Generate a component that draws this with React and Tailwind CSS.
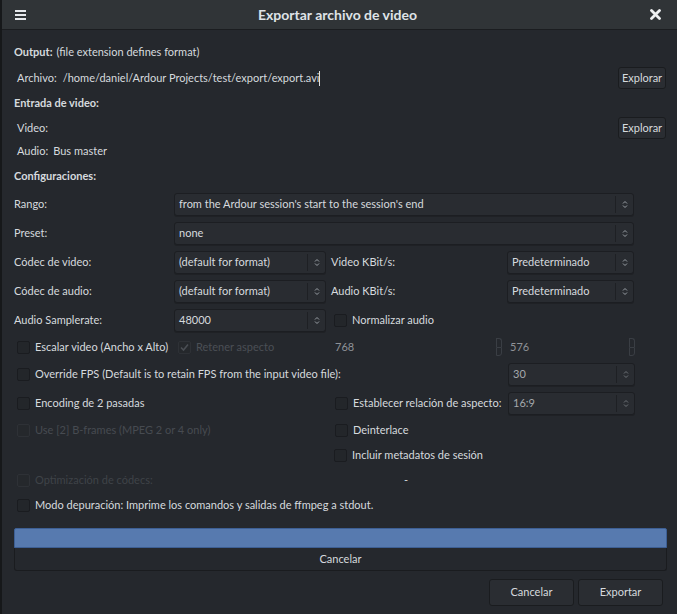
import React from "react";

const F = { fontFamily: 'Lato, "Noto Sans", "DejaVu Sans", sans-serif' };

function Check({ checked, disabled }) {
  return (
    <div
      className={`w-[13px] h-[13px] rounded-[2px] border flex items-center justify-center shrink-0 ${
        disabled ? "border-[#2e3136] bg-[#25282c]" : "border-[#1a1c20] bg-[#23262a]"
      }`}
    >
      {checked && (
        <svg width="11" height="11" viewBox="0 0 11 11">
          <path d="M2 5.5 L4.5 8 L9 2.5" fill="none" stroke={disabled ? "#4a4e54" : "#d3d7db"} strokeWidth="1.6" />
        </svg>
      )}
    </div>
  );
}

function Arrows({ dim }) {
  return (
    <svg width="6" height="9" viewBox="0 0 6 9">
      <path d="M1 3.5 L3 1.5 L5 3.5 M1 5.5 L3 7.5 L5 5.5" fill="none" stroke={dim ? "#6e7378" : "#9aa0a6"} strokeWidth="1" />
    </svg>
  );
}

function Combo({ text, w, dim }) {
  return (
    <div
      className={`h-[23px] rounded-[3px] border border-[#1c1e22] bg-[#292c31] flex items-center shrink-0 shadow-[0_1px_0_#1f2125] ${w}`}
    >
      <div className={`flex-1 pl-[4px] truncate ${dim ? "text-[#a4a8ac]" : "text-[#d6dade]"}`}>{text}</div>
      <div className="w-px h-[17px] bg-[#1e2024]" />
      <div className="w-[17px] flex items-center justify-center">
        <Arrows dim={dim} />
      </div>
    </div>
  );
}

function Btn({ children, cls }) {
  return (
    <div
      className={`rounded-[3px] border border-[#1a1c1f] bg-[#2a2d32] flex items-center justify-center text-[#d6dade] ${cls}`}
    >
      {children}
    </div>
  );
}

function Spin() {
  return (
    <div className="flex flex-col w-[6px] h-[18px]">
      <div className="h-[9px] border border-[#3a3e44] border-b-0 rounded-tr-[3px]" />
      <div className="h-[9px] border border-[#3a3e44] rounded-br-[3px]" />
    </div>
  );
}

export default function App() {
  return (
    <div style={F} className="w-[677px] h-[614px] bg-[#25282d] text-[11px] text-[#d6dade] flex flex-col overflow-hidden border-l-[2px] border-[#16181a] whitespace-nowrap">
      {/* Title bar */}
      <div className="h-[30px] bg-[#303437] border-b border-[#1b1d20] flex items-center px-[12px] shrink-0">
        <svg width="12" height="10" viewBox="0 0 12 10" className="ml-[1px]">
          <rect x="0" y="0" width="11" height="2" fill="#e6e9ec" />
          <rect x="0" y="4" width="11" height="2" fill="#e6e9ec" />
          <rect x="0" y="8" width="11" height="2" fill="#e6e9ec" />
        </svg>
        <div className="flex-1 text-center font-bold text-[14px] text-[#dfe3e7] -ml-[2px]">Exportar archivo de video</div>
        <svg width="11" height="11" viewBox="0 0 11 11" className="mr-[4px]">
          <path d="M1.5 1.5 L9.5 9.5 M9.5 1.5 L1.5 9.5" stroke="#eef0f2" strokeWidth="2.8" strokeLinecap="round" />
        </svg>
      </div>

      <div className="flex flex-col pl-[12px] pr-[11px]">
        <div className="h-[22px] mt-[11px] flex items-center">
          <span className="font-bold">Output:</span>
          <span className="ml-[4px]">(file extension defines format)</span>
        </div>
        <div className="h-[22px] mt-[4px] flex items-center">
          <span className="ml-[3px]">Archivo:</span>
          <span className="ml-[6px]">/home/daniel/Ardour Projects/test/export/export.avi</span>
          <span className="w-px h-[15px] bg-[#e0e0e0]" />
          <div className="flex-1" />
          <Btn cls="w-[48px] h-[22px]">Explorar</Btn>
        </div>
        <div className="h-[22px] mt-[3px] flex items-center font-bold">Entrada de video:</div>
        <div className="h-[22px] mt-[3px] flex items-center">
          <span className="ml-[3px]">Video:</span>
          <div className="flex-1" />
          <Btn cls="w-[48px] h-[22px]">Explorar</Btn>
        </div>
        <div className="h-[22px] mt-[1px] flex items-center">
          <span className="ml-[3px]">Audio:</span>
          <span className="ml-[5px]">Bus master</span>
        </div>
        <div className="h-[22px] mt-[3px] flex items-center font-bold">Configuraciones:</div>

        {/* Rango */}
        <div className="h-[23px] mt-[6px] flex items-center">
          <div className="w-[160px]">Rango:</div>
          <Combo w="w-[460px]" text="from the Ardour session's start to the session's end" />
        </div>
        <div className="h-[23px] mt-[6px] flex items-center">
          <div className="w-[160px]">Preset:</div>
          <Combo w="w-[460px]" text="none" />
        </div>
        <div className="h-[23px] mt-[6px] flex items-center">
          <div className="w-[160px]">Códec de video:</div>
          <Combo w="w-[152px]" text="(default for format)" />
          <div className="w-[181px] pl-[5px]">Video KBit/s:</div>
          <Combo w="w-[127px]" text="Predeterminado" />
        </div>
        <div className="h-[23px] mt-[6px] flex items-center">
          <div className="w-[160px]">Códec de audio:</div>
          <Combo w="w-[152px]" text="(default for format)" />
          <div className="w-[181px] pl-[5px]">Audio KBit/s:</div>
          <Combo w="w-[127px]" text="Predeterminado" />
        </div>
        <div className="h-[23px] mt-[6px] flex items-center">
          <div className="w-[160px]">Audio Samplerate:</div>
          <Combo w="w-[152px]" text="48000" />
          <div className="ml-[8px]"><Check /></div>
          <span className="ml-[5px]">Normalizar audio</span>
        </div>

        {/* Escalar */}
        <div className="h-[22px] mt-[4px] flex items-center">
          <div className="ml-[3px]"><Check /></div>
          <span className="ml-[5px] w-[143px]">Escalar video (Ancho x Alto)</span>
          <Check checked disabled />
          <span className="ml-[5px] w-[139px] text-[#4b4f55]">Retener aspecto</span>
          <span className="w-[161px] text-[#8e9297]">768</span>
          <Spin />
          <span className="ml-[8px] w-[119px] text-[#8e9297]">576</span>
          <Spin />
        </div>
        <div className="h-[23px] mt-[5px] flex items-center">
          <div className="ml-[3px]"><Check /></div>
          <span className="ml-[5px] w-[473px]">Override FPS (Default is to retain FPS from the input video file):</span>
          <Combo w="w-[127px]" text="30" dim />
        </div>
        <div className="h-[23px] mt-[6px] flex items-center">
          <div className="ml-[3px]"><Check /></div>
          <span className="ml-[5px] w-[300px]">Encoding de 2 pasadas</span>
          <Check />
          <span className="ml-[5px] w-[155px]">Establecer relación de aspecto:</span>
          <Combo w="w-[127px]" text="16:9" dim />
        </div>
        <div className="h-[22px] mt-[4px] flex items-center">
          <div className="ml-[3px]"><Check disabled /></div>
          <span className="ml-[5px] w-[300px] text-[#474b51]">Use [2] B-frames (MPEG 2 or 4 only)</span>
          <Check />
          <span className="ml-[5px]">Deinterlace</span>
        </div>
        <div className="h-[22px] mt-[3px] flex items-center">
          <div className="ml-[320px]"><Check /></div>
          <span className="ml-[5px]">Incluir metadatos de sesión</span>
        </div>
        <div className="h-[22px] mt-[3px] flex items-center">
          <div className="ml-[3px]"><Check disabled /></div>
          <span className="ml-[5px] w-[369px] text-[#3f4348]">Optimización de códecs:</span>
          <span>-</span>
        </div>
        <div className="h-[22px] mt-[3px] flex items-center">
          <div className="ml-[3px]"><Check /></div>
          <span className="ml-[5px]">Modo depuración: Imprime los comandos y salidas de ffmpeg a stdout.</span>
        </div>

        {/* Progress */}
        <div className="mt-[12px] mr-[-1px] h-[20px] bg-[#577aaf] border border-[#3d5f94] rounded-t-[2px]" />
        <div className="h-[23px] mr-[-1px] bg-[#25282d] border border-[#1a1c1f] border-t-0 rounded-b-[3px] flex items-center justify-center">
          Cancelar
        </div>

        <div className="mt-[8px] flex justify-end gap-[4px] pr-[3px]">
          <Btn cls="w-[85px] h-[27px]">Cancelar</Btn>
          <Btn cls="w-[85px] h-[27px]">Exportar</Btn>
        </div>
      </div>
    </div>
  );
}
